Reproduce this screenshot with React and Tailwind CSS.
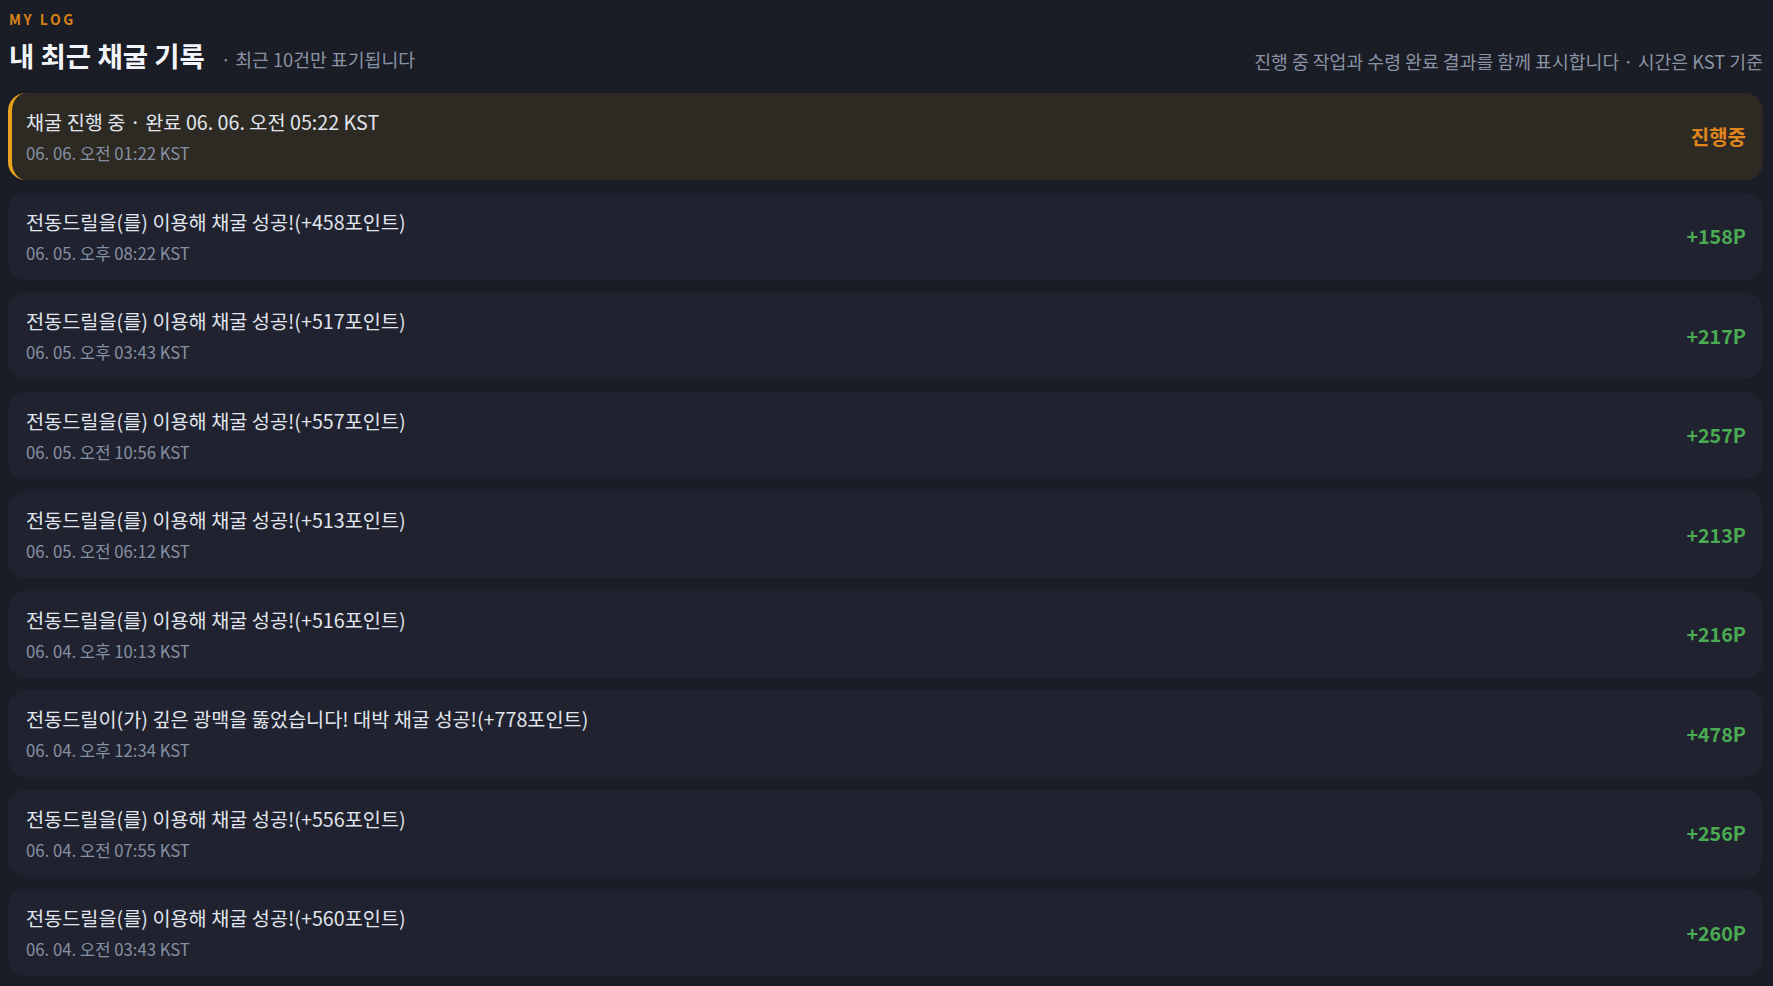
import React from "react";

const logs = [
  { title: "채굴 진행 중 · 완료 06. 06. 오전 05:22 KST", time: "06. 06. 오전 01:22 KST", value: "진행중", active: true },
  { title: "전동드릴을(를) 이용해 채굴 성공!(+458포인트)", time: "06. 05. 오후 08:22 KST", value: "+158P" },
  { title: "전동드릴을(를) 이용해 채굴 성공!(+517포인트)", time: "06. 05. 오후 03:43 KST", value: "+217P" },
  { title: "전동드릴을(를) 이용해 채굴 성공!(+557포인트)", time: "06. 05. 오전 10:56 KST", value: "+257P" },
  { title: "전동드릴을(를) 이용해 채굴 성공!(+513포인트)", time: "06. 05. 오전 06:12 KST", value: "+213P" },
  { title: "전동드릴을(를) 이용해 채굴 성공!(+516포인트)", time: "06. 04. 오후 10:13 KST", value: "+216P" },
  { title: "전동드릴이(가) 깊은 광맥을 뚫었습니다! 대박 채굴 성공!(+778포인트)", time: "06. 04. 오후 12:34 KST", value: "+478P" },
  { title: "전동드릴을(를) 이용해 채굴 성공!(+556포인트)", time: "06. 04. 오전 07:55 KST", value: "+256P" },
  { title: "전동드릴을(를) 이용해 채굴 성공!(+560포인트)", time: "06. 04. 오전 03:43 KST", value: "+260P" },
];

function LogRow({ title, time, value, active }) {
  return (
    <div
      className={
        active
          ? "h-[87px] flex items-center justify-between rounded-[18px] border-l-4 border-[#e9a21d] bg-[#2d2a23] pl-[14px] pr-[17px]"
          : "h-[87px] flex items-center justify-between rounded-[18px] border-l-4 border-transparent bg-[#20232f] pl-[14px] pr-[17px]"
      }
    >
      <div className="flex flex-col">
        <span className="text-[19.7px] leading-[26px] text-[#e1e5ee]">{title}</span>
        <span className="mt-[7px] text-[16.7px] leading-[22px] text-[#8690a3]">{time}</span>
      </div>
      <span className={active ? "text-[20px] font-bold text-[#e0861d]" : "text-[19.7px] font-bold text-[#4aab52]"}>
        {value}
      </span>
    </div>
  );
}

export default function App() {
  return (
    <div
      className="min-h-screen bg-[#1b1d26] pl-2 pr-[10px] pt-[9px] pb-2"
      style={{ fontFamily: '"Noto Sans CJK KR", "Noto Sans", sans-serif' }}
    >
      <div className="text-[14px] leading-[20px] font-bold tracking-[0.18em] text-[#d9801a] pl-px">MY LOG</div>

      <div className="mt-[8.5px] flex h-[34px] items-end justify-between">
        <div className="flex items-baseline">
          <h1 className="text-[27.5px] leading-[34px] font-bold text-[#f3f4f7] pl-px">내 최근 채굴 기록</h1>
          <span className="ml-4 text-[18.3px] leading-[24px] text-[#8a93a5]">· 최근 10건만 표기됩니다</span>
        </div>
        <p className="-mb-px text-[18.3px] leading-[24px] text-[#8a93a5]">
          진행 중 작업과 수령 완료 결과를 함께 표시합니다 · 시간은 KST 기준
        </p>
      </div>

      <div className="mt-[21.5px] flex flex-col gap-[12.5px]">
        {logs.map((log, i) => (
          <LogRow key={i} {...log} />
        ))}
      </div>
    </div>
  );
}
